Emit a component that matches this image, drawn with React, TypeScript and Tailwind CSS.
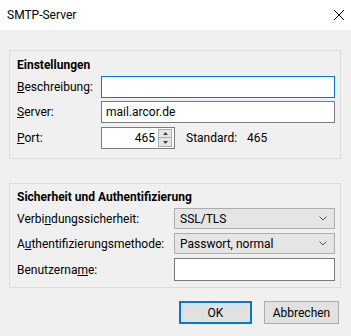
const font = { fontFamily: 'Roboto, "Noto Sans", sans-serif' };

function Chevron() {
  return (
    <svg width="8" height="5" viewBox="0 0 8 5" className="shrink-0">
      <path d="M0.5 0.5 L4 4 L7.5 0.5" fill="none" stroke="#555" strokeWidth="1" />
    </svg>
  );
}

function Select({ value }: { value: string }) {
  return (
    <div className="flex h-[21px] w-[161px] items-center justify-between border border-[#adadad] bg-[#e5e5e5] pl-[5px] pr-[7px]">
      <span>{value}</span>
      <Chevron />
    </div>
  );
}

export default function App() {
  return (
    <div className="h-[336px] w-[351px] bg-[#f0f0f0] text-[12px] leading-[16px] text-black" style={font}>
      <div className="flex h-[30px] items-center justify-between bg-white pl-[7px] pr-[6px]">
        <span>SMTP-Server</span>
        <svg width="12" height="12" viewBox="0 0 12 12">
          <path d="M1 1 L11 11 M11 1 L1 11" stroke="#000" strokeWidth="1" />
        </svg>
      </div>

      <div className="ml-[9px] mt-[20px] w-[332px] border border-[#dcdcdc] pb-[9px] pl-[7px] pt-[6px]">
        <div className="font-bold">Einstellungen</div>
        <div className="mt-[3px] flex flex-col gap-[3px]">
          <div className="flex items-center">
            <span className="w-[84px]"><u>B</u>eschreibung:</span>
            <div className="h-[22px] w-[234px] border border-[#0078d7] bg-white" />
          </div>
          <div className="flex items-center">
            <span className="w-[84px]"><u>S</u>erver:</span>
            <div className="flex h-[22px] w-[234px] items-center border border-[#7a7a7a] bg-white px-[4px]">
              mail.arcor.de
            </div>
          </div>
          <div className="mt-[1px] flex items-center">
            <span className="w-[84px]"><u>P</u>ort:</span>
            <div className="flex h-[22px] w-[74px] items-center justify-end border border-[#7a7a7a] bg-white pr-[2px]">
              <span className="mr-[3px]">465</span>
              <div className="flex flex-col">
                <div className="flex h-[9px] w-[14px] items-center justify-center border border-[#adadad] bg-[#e5e5e5]">
                  <svg width="5" height="3" viewBox="0 0 5 3"><path d="M0 3 L2.5 0 L5 3 Z" fill="#444" /></svg>
                </div>
                <div className="flex h-[9px] w-[14px] items-center justify-center border border-t-0 border-[#adadad] bg-[#e5e5e5]">
                  <svg width="5" height="3" viewBox="0 0 5 3"><path d="M0 0 L2.5 3 L5 0 Z" fill="#444" /></svg>
                </div>
              </div>
            </div>
            <span className="ml-[11px] w-[61px]">Standard:</span>
            <span>465</span>
          </div>
        </div>
      </div>

      <div className="ml-[9px] mt-[24px] w-[332px] border border-[#dcdcdc] pb-[6px] pl-[7px] pt-[5px]">
        <div className="font-bold">Sicherheit und Authentifizierung</div>
        <div className="mt-[3px] flex flex-col gap-[4px]">
          <div className="flex items-center">
            <span className="w-[157px]">Verbi<u>n</u>dungssicherheit:</span>
            <Select value="SSL/TLS" />
          </div>
          <div className="flex items-center">
            <span className="w-[157px]">A<u>u</u>thentifizierungsmethode:</span>
            <Select value="Passwort, normal" />
          </div>
          <div className="flex items-center">
            <span className="w-[157px]">Benutzerna<u>m</u>e:</span>
            <div className="h-[23px] w-[161px] border border-[#7a7a7a] bg-white" />
          </div>
        </div>
      </div>

      <div className="mr-[12px] mt-[13px] flex justify-end gap-[12px]">
        <button className="h-[23px] w-[73px] border-2 border-[#0078d7] bg-[#e1e1e1]">OK</button>
        <button className="h-[23px] w-[75px] border border-[#adadad] bg-[#e1e1e1]">Abbrechen</button>
      </div>
    </div>
  );
}
